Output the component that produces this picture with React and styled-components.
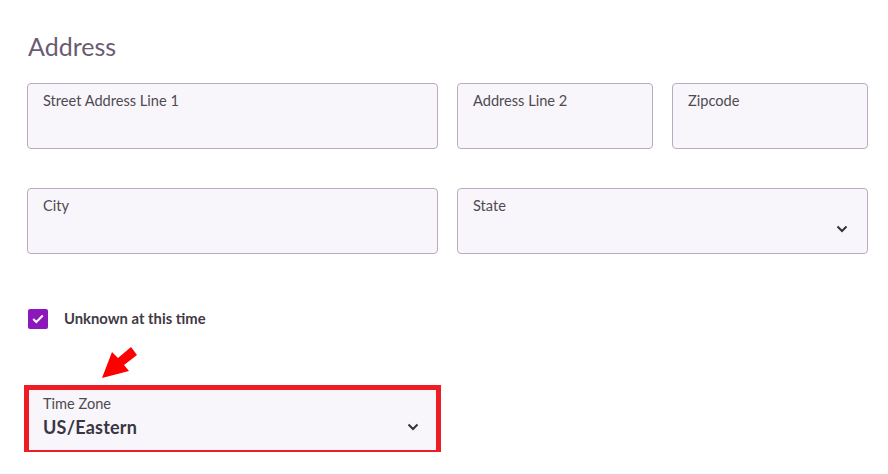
import React from "react";
import styled, { createGlobalStyle } from "styled-components";

const GlobalStyle = createGlobalStyle`
  body {
    margin: 0;
    background: #ffffff;
    font-family: Lato, "Open Sans", sans-serif;
  }
`;

const Page = styled.div`
  position: relative;
  padding: 29px 0 0 27px;
  width: 841px;
`;

const Heading = styled.h2`
  margin: 0 0 0 1px;
  font-size: 25px;
  line-height: 34px;
  font-weight: 400;
  color: #6a5b73;
`;

const Grid = styled.div`
  display: grid;
  grid-template-columns: 411px 196px 196px;
  column-gap: 19px;
  row-gap: 39px;
  margin-top: 20px;
`;

const Field = styled.div`
  box-sizing: border-box;
  grid-column: ${props => props.span || "auto"};
  height: 66px;
  padding: 8px 19px 0 15px;
  border: 1px solid #b9abc3;
  border-radius: 4px;
  background: #f8f6fa;
  display: flex;
  flex-direction: column;
`;

const HighlightField = styled(Field)`
  width: 411px;
  height: 64px;
  border: 2px solid #ee1c25;
  border-radius: 0;
  padding: 5px 17px 0 14px;
  box-shadow: 0 0 0 3px #ee1c25;
`;

const Label = styled.span`
  font-size: 14.6px;
  line-height: 18px;
  color: #4f4a52;
`;

const ValueRow = styled.div`
  display: flex;
  align-items: center;
  justify-content: space-between;
  height: 28px;
`;

const Value = styled.span`
  font-size: 18px;
  font-weight: 700;
  color: #3a3540;
  letter-spacing: 0.2px;
`;

const CheckRow = styled.label`
  display: flex;
  align-items: center;
  gap: 16px;
  margin-top: 55px;
  margin-left: 1px;
`;

const CheckBox = styled.span`
  width: 20px;
  height: 20px;
  border-radius: 2px;
  background: #8c17bb;
  display: flex;
  align-items: center;
  justify-content: center;
`;

const CheckText = styled.span`
  font-size: 14.8px;
  font-weight: 700;
  color: #3f3a44;
  margin-top: -3px;
`;

const TimeZoneWrap = styled.div`
  margin-top: 59px;
`;

const Arrow = styled.svg`
  position: absolute;
  left: 98px;
  top: 345px;
`;

function Chevron() {
  return (
    <svg width="12" height="8" viewBox="0 0 12 8">
      <path d="M1.5 1.5 L6 6 L10.5 1.5" fill="none" stroke="#333" strokeWidth="2" />
    </svg>
  );
}

function TextField({ label, span }) {
  return (
    <Field span={span}>
      <Label>{label}</Label>
    </Field>
  );
}

function SelectField({ label, span, value }) {
  return (
    <Field span={span}>
      <Label>{label}</Label>
      <ValueRow>
        <Value>{value}</Value>
        <Chevron />
      </ValueRow>
    </Field>
  );
}

export default function App() {
  return (
    <>
      <GlobalStyle />
      <Page>
        <Heading>Address</Heading>
        <Grid>
          <TextField label="Street Address Line 1" />
          <TextField label="Address Line 2" />
          <TextField label="Zipcode" />
          <TextField label="City" />
          <SelectField label="State" span="2 / 4" />
        </Grid>
        <CheckRow>
          <CheckBox>
            <svg width="12" height="10" viewBox="0 0 12 10">
              <path d="M1.2 5 L4.3 8 L10.8 1.5" fill="none" stroke="#fff" strokeWidth="2" />
            </svg>
          </CheckBox>
          <CheckText>Unknown at this time</CheckText>
        </CheckRow>
        <TimeZoneWrap>
          <HighlightField>
            <Label>Time Zone</Label>
            <ValueRow>
              <Value>US/Eastern</Value>
              <Chevron />
            </ValueRow>
          </HighlightField>
        </TimeZoneWrap>
        <Arrow width="42" height="36" viewBox="98 345 42 36">
          <polygon
            points="102,378 112,352 118,358 131,347 137,355 124,365 129,371"
            fill="#ff0000"
          />
        </Arrow>
      </Page>
    </>
  );
}
